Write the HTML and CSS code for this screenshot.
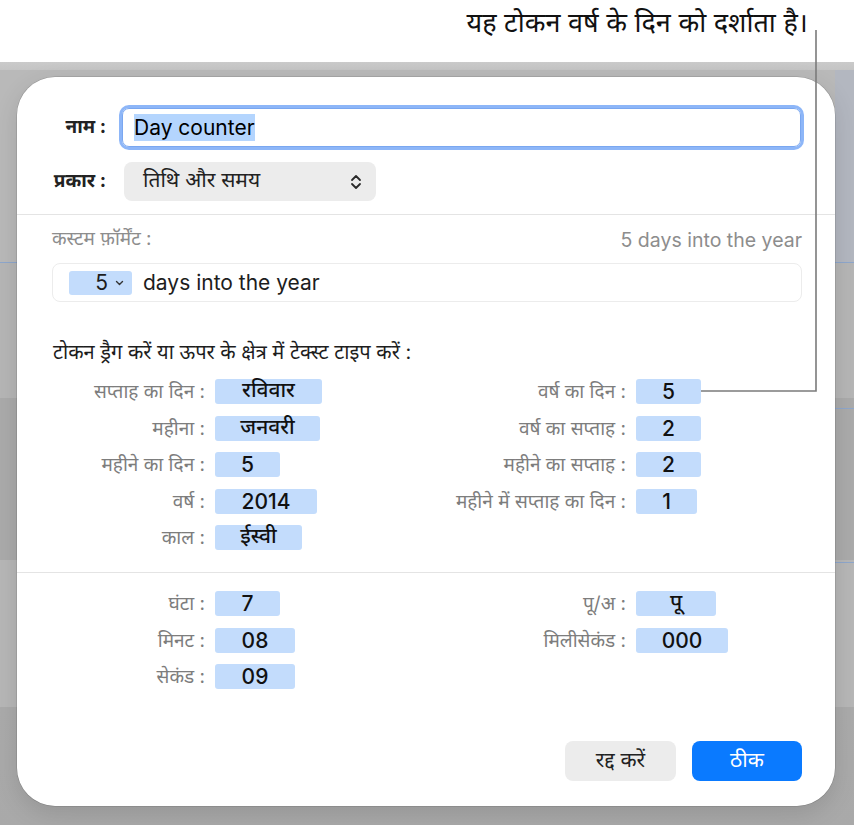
FILE: index.html
```html
<!DOCTYPE html>
<html lang="hi">
<head>
    <meta charset="UTF-8">
    <meta name="viewport" content="width=device-width, initial-scale=1.0">
    <title>कस्टम फ़ॉर्मेट</title>
    <link rel="stylesheet" href="styles.css">
</head>
<body>
<div class="screen">
    <header class="caption">यह टोकन वर्ष के दिन को दर्शाता है।</header>

    <div class="backdrop">
        <section class="dialog">
            <div class="field-row">
                <label class="row-label">नाम :</label>
                <div class="name-input"><span class="selected">Day counter</span></div>
            </div>
            <div class="field-row type-row">
                <label class="row-label">प्रकार :</label>
                <div class="popup">
                    <span>तिथि और समय</span>
                    <svg width="12" height="18" viewBox="0 0 12 18">
                        <path d="M2 7 L6 3 L10 7 M2 11 L6 15 L10 11" fill="none" stroke="#2a2a2a" stroke-width="1.8" stroke-linecap="round" stroke-linejoin="round"/>
                    </svg>
                </div>
            </div>

            <hr class="divider">

            <div class="body">
                <div class="format-head">
                    <span>कस्टम फ़ॉर्मेंट :</span>
                    <span class="latin">5 days into the year</span>
                </div>
                <div class="format-field">
                    <span class="pick">5
                        <svg width="9" height="6" viewBox="0 0 9 6"><path d="M1.5 1.5 L4.5 4.5 L7.5 1.5" fill="none" stroke="#333" stroke-width="1.4" stroke-linecap="round" stroke-linejoin="round"/></svg>
                    </span>
                    <span>days into the year</span>
                </div>

                <p class="hint">टोकन ड्रैग करें या ऊपर के क्षेत्र में टेक्स्ट टाइप करें :</p>

                <div class="tokens">
                    <span class="tk-label">सप्ताह का दिन :</span><span class="token w107">रविवार</span>
                    <span class="tk-label">वर्ष का दिन :</span><span class="token w65">5</span>

                    <span class="tk-label">महीना :</span><span class="token w105">जनवरी</span>
                    <span class="tk-label">वर्ष का सप्ताह :</span><span class="token w65">2</span>

                    <span class="tk-label">महीने का दिन :</span><span class="token w65">5</span>
                    <span class="tk-label">महीने का सप्ताह :</span><span class="token w65">2</span>

                    <span class="tk-label">वर्ष :</span><span class="token w102">2014</span>
                    <span class="tk-label">महीने में सप्ताह का दिन :</span><span class="token w61">1</span>

                    <span class="tk-label">काल :</span><span class="token w87">ईस्वी</span>
                </div>
            </div>

            <hr class="divider lower">

            <div class="body">
                <div class="tokens time">
                    <span class="tk-label">घंटा :</span><span class="token w65">7</span>
                    <span class="tk-label">पू/अ :</span><span class="token w80">पू</span>

                    <span class="tk-label">मिनट :</span><span class="token w80">08</span>
                    <span class="tk-label">मिलीसेकंड :</span><span class="token w92">000</span>

                    <span class="tk-label">सेकंड :</span><span class="token w80">09</span>
                </div>

                <div class="actions">
                    <button type="button" class="btn">रद्द करें</button>
                    <button type="button" class="btn primary">ठीक</button>
                </div>
            </div>
        </section>
    </div>

    <!-- leader line from the caption to the day-of-year token -->
    <svg class="callout" width="854" height="825">
        <polyline points="816,30 816,391 701,391" fill="none" stroke="#7b7b7b" stroke-width="1.6"/>
    </svg>
</div>
</body>
</html>
```

FILE: styles.css
```css
*{
    box-sizing: border-box;
}

body{
    margin: 0;
    background: #fff;
    font-family: Inter, "Noto Sans Devanagari", "Noto Sans", sans-serif;
    color: #1d1d1f;
}

.screen{
    position: relative;
    width: 854px;
    height: 825px;
    overflow: hidden;
}

.caption{
    height: 62px;
    padding: 6px 46px 0 0;
    text-align: right;
    font-size: 27px;
    line-height: 34px;
    color: #111;
}

/* blurred app window behind the sheet */
.backdrop{
    height: 763px;
    padding: 15px 19px 19px 17px;
    background:
        linear-gradient(#b3b7c0, #b3b7c0) right 8px / 19px 192px no-repeat,
        linear-gradient(#8ea7cc, #8ea7cc) right 346px / 19px 1px no-repeat,
        linear-gradient(#8ea7cc, #8ea7cc) right 500px / 19px 1px no-repeat,
        linear-gradient(to bottom,
            #cacaca 0, #c4c4c4 8px,
            #b9b9b9 8px, #b9b9b9 200px,
            #8ea7cc 200px, #8ea7cc 201px,
            #b6b6b6 201px, #b6b6b6 336px,
            #ababab 336px, #ababab 498px,
            #b7b7b7 498px, #b7b7b7 645px,
            #ababab 645px, #a9a9a9 763px);
}

.dialog{
    height: 729px;
    background: #fff;
    border-radius: 38px;
    padding-top: 31px;
    box-shadow: 0 0 0 0.5px rgba(0,0,0,0.18), 0 8px 24px rgba(0,0,0,0.12);
}

.field-row{
    display: flex;
    align-items: center;
    padding: 0 33px 0 35px;
}

.type-row{
    margin-top: 15px;
}

.row-label{
    width: 54px;
    flex: none;
    text-align: right;
    font-size: 19px;
    font-weight: 700;
    color: #222;
    white-space: nowrap;
}

.name-input{
    flex: 1;
    height: 39px;
    margin-left: 16px;
    margin-right: 1px;
    padding: 0 11px;
    display: flex;
    align-items: center;
    border: 1px solid #7aa7f0;
    border-radius: 7px;
    box-shadow: 0 0 0 3px #8db6f8;
    font-size: 21px;
}

.selected{
    background: #b4d5fe;
    color: #000;
    line-height: 27px;
}

.popup{
    width: 252px;
    height: 39px;
    margin-left: 18px;
    padding: 0 14px 0 19px;
    display: flex;
    align-items: center;
    justify-content: space-between;
    background: #ececec;
    border-radius: 8px;
    font-size: 21px;
    color: #222;
}

.divider{
    margin: 13px 0 0;
    border: none;
    border-top: 1px solid #e4e4e4;
}

.divider.lower{
    margin-top: 22px;
}

.body{
    padding: 0 33px 0 35px;
}

.format-head{
    display: flex;
    justify-content: space-between;
    align-items: center;
    height: 22px;
    margin-top: 14px;
    font-size: 19px;
    color: #8d8d8d;
}

.format-head .latin{
    font-size: 19.5px;
}

.format-field{
    height: 39px;
    margin-top: 12px;
    padding: 0 16px;
    display: flex;
    align-items: center;
    gap: 11px;
    border: 1px solid #ececec;
    border-radius: 8px;
    font-size: 21px;
    color: #1d1d1d;
}

.pick{
    width: 63px;
    height: 24px;
    display: flex;
    align-items: center;
    justify-content: flex-end;
    gap: 7px;
    padding-right: 8px;
    background: #c3dcfc;
    border-radius: 3px;
    font-size: 21px;
}

.hint{
    margin: 39px 0 0 1px;
    font-size: 20px;
    line-height: 22px;
    color: #1d1d1d;
}

.tokens{
    display: grid;
    grid-template-columns: 153px 140px 261px 166px;
    column-gap: 10px;
    row-gap: 11.5px;
    align-items: center;
    margin-top: 16px;
}

.tokens.time{
    margin-top: 18px;
}

.tk-label{
    text-align: right;
    font-size: 19px;
    line-height: 25px;
    color: #7d7d7d;
    white-space: nowrap;
}

.token{
    height: 25px;
    display: flex;
    align-items: center;
    justify-content: center;
    background: #c3dcfc;
    border-radius: 3px;
    font-size: 21px;
    font-weight: 500;
    color: #111;
}

.w61{ width: 61px; }
.w65{ width: 65px; }
.w80{ width: 80px; }
.w87{ width: 87px; }
.w92{ width: 92px; }
.w102{ width: 102px; }
.w105{ width: 105px; }
.w107{ width: 107px; }

.actions{
    display: flex;
    justify-content: flex-end;
    gap: 16px;
    margin-top: 52px;
}

.btn{
    width: 111px;
    height: 40px;
    border: none;
    border-radius: 8px;
    background: #ececec;
    font-family: inherit;
    font-size: 21px;
    color: #222;
}

.btn.primary{
    width: 110px;
    background: #0a7aff;
    color: #fff;
}

.callout{
    position: absolute;
    top: 0;
    left: 0;
    pointer-events: none;
}
```
